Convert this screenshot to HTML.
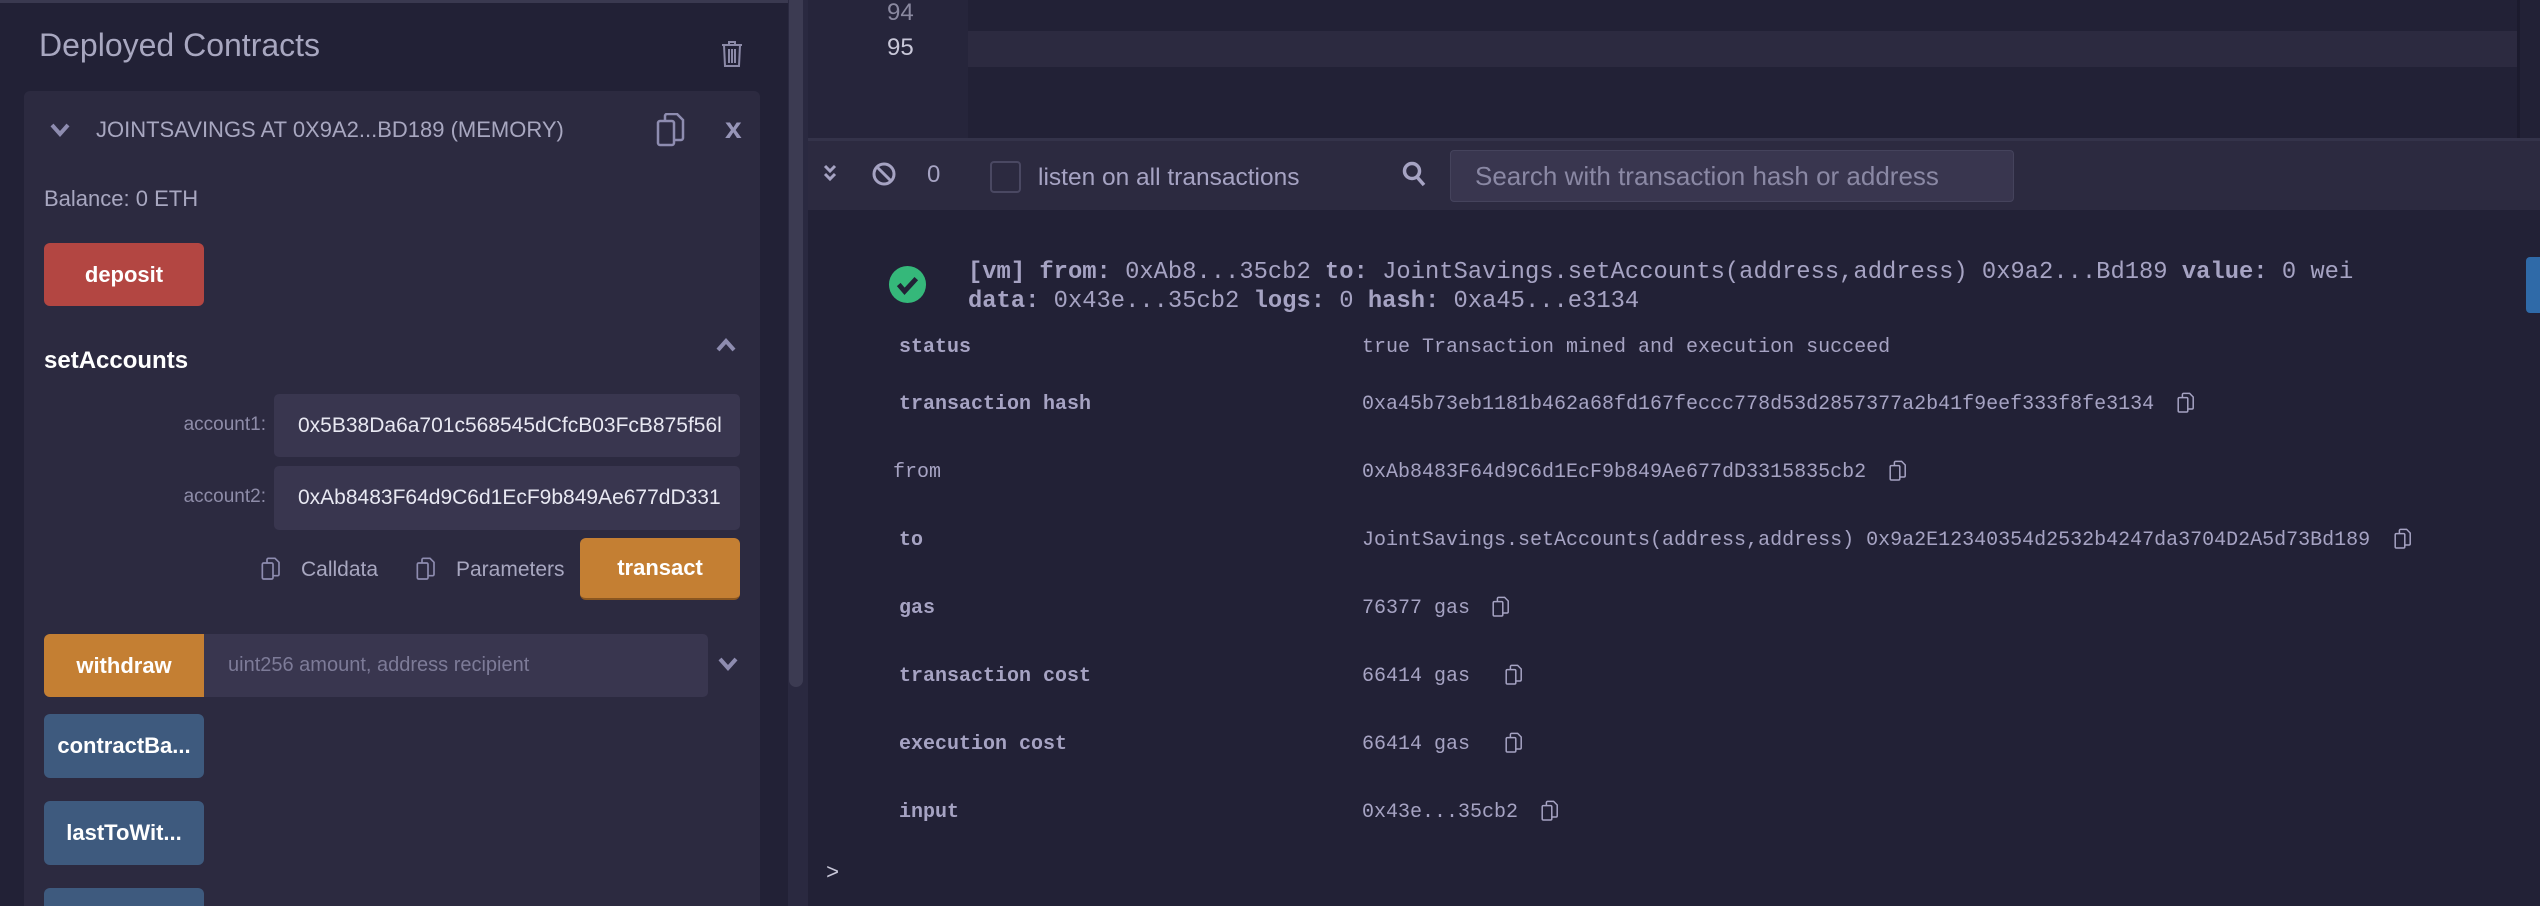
<!DOCTYPE html>
<html style="overflow:hidden;height:906px"><head><meta charset="utf-8"><style>
*{margin:0;padding:0;box-sizing:border-box}
body{width:2540px;height:906px;background:#222136;position:relative;overflow:hidden;font-family:"Liberation Sans",sans-serif;color:#a2a1bd}
.a{position:absolute;white-space:nowrap}
.btn{position:absolute;border-radius:6px;color:#fff;font-size:22px;font-weight:bold;display:flex;align-items:center;justify-content:center}
.inp{position:absolute;background:#39364f;border-radius:5px;color:#e8e8f2;font-size:21px;padding-left:24px;display:flex;align-items:center;overflow:hidden}
.mono{font-family:"Liberation Mono",monospace;color:#a6a3c3}
.lbl{font-size:20px;font-weight:bold}
.val{font-size:20px}
svg.cp{position:absolute}
</style></head><body>
<div class="a" style="left:0;top:0;width:788px;height:906px;background:#222136"></div>
<div class="a" style="left:0;top:0;width:788px;height:3px;background:#3a3950"></div>
<div class="a" style="left:39px;top:27px;font-size:32px;color:#a8a7c0">Deployed Contracts</div>
<svg class="cp" style="left:721px;top:40px" width="22" height="28" viewBox="0 0 22 28" fill="none" stroke="#8c8aa8" stroke-width="2"><path d="M1 5h20M8 5V2h6v3M3 5l1 21h14l1-21M8 9v14M11 9v14M14 9v14"/></svg>
<div class="a" style="left:24px;top:91px;width:736px;height:815px;background:#2c2a40;border-radius:6px 6px 0 0"></div>
<svg class="cp" style="left:50px;top:122px" width="20" height="16" viewBox="0 0 20 16"><path d="M2 3l8 9 8-9" fill="none" stroke="#8e8cb0" stroke-width="4"/></svg>
<div class="a" style="left:96px;top:117px;font-size:22px;color:#a8a7c0">JOINTSAVINGS AT 0X9A2...BD189 (MEMORY)</div>
<svg class="cp" style="left:656px;top:113px" width="30" height="34" viewBox="0 0 30 34" fill="none" stroke="#8e8cb0" stroke-width="2.5"><rect x="2" y="8" width="16" height="24" rx="2"/><path d="M9 8V3a2 2 0 0 1 2-2h10l6 6v18a2 2 0 0 1-2 2h-7"/></svg>
<div class="a" style="left:725px;top:112px;font-size:30px;font-weight:bold;color:#9795b8">x</div>
<div class="a" style="left:44px;top:186px;font-size:22px;color:#a8a7c0">Balance: 0 ETH</div>
<div class="btn" style="left:44px;top:243px;width:160px;height:63px;background:#b34642">deposit</div>
<div class="a" style="left:44px;top:347px;font-size:24px;font-weight:bold;color:#fff">setAccounts</div>
<svg class="cp" style="left:716px;top:337px" width="20" height="16" viewBox="0 0 20 16"><path d="M2 13l8-9 8 9" fill="none" stroke="#8e8cb0" stroke-width="4"/></svg>
<div class="a" style="left:170px;top:414px;width:96px;text-align:right;font-size:19px;color:#8e8ca8">account1:</div>
<div class="inp" style="left:274px;top:394px;width:466px;height:63px">0x5B38Da6a701c568545dCfcB03FcB875f56l</div>
<div class="a" style="left:170px;top:486px;width:96px;text-align:right;font-size:19px;color:#8e8ca8">account2:</div>
<div class="inp" style="left:274px;top:466px;width:466px;height:64px">0xAb8483F64d9C6d1EcF9b849Ae677dD331</div>
<svg class="cp" style="left:261px;top:557px" width="20" height="24" viewBox="0 0 30 34" fill="none" stroke="#8e8cb0" stroke-width="2.5"><rect x="2" y="8" width="16" height="24" rx="2"/><path d="M9 8V3a2 2 0 0 1 2-2h10l6 6v18a2 2 0 0 1-2 2h-7"/></svg>
<div class="a" style="left:301px;top:558px;font-size:21px;color:#a8a7c0">Calldata</div>
<svg class="cp" style="left:416px;top:557px" width="20" height="24" viewBox="0 0 30 34" fill="none" stroke="#8e8cb0" stroke-width="2.5"><rect x="2" y="8" width="16" height="24" rx="2"/><path d="M9 8V3a2 2 0 0 1 2-2h10l6 6v18a2 2 0 0 1-2 2h-7"/></svg>
<div class="a" style="left:456px;top:558px;font-size:21px;color:#a8a7c0">Parameters</div>
<div class="btn" style="left:580px;top:538px;width:160px;height:62px;background:#c47f33;border-bottom:2px solid #8a5620">transact</div>
<div class="btn" style="left:44px;top:634px;width:160px;height:63px;background:#c47f33;border-radius:6px 0 0 6px">withdraw</div>
<div class="inp" style="left:204px;top:634px;width:504px;height:63px;border-radius:0 5px 5px 0;color:#7d7b98;font-size:20px">uint256 amount, address recipient</div>
<svg class="cp" style="left:718px;top:656px" width="20" height="16" viewBox="0 0 20 16"><path d="M2 3l8 9 8-9" fill="none" stroke="#8e8cb0" stroke-width="4"/></svg>
<div class="btn" style="left:44px;top:714px;width:160px;height:64px;background:#3e5a7e">contractBa...</div>
<div class="btn" style="left:44px;top:801px;width:160px;height:64px;background:#3e5a7e">lastToWit...</div>
<div class="btn" style="left:44px;top:888px;width:160px;height:18px;background:#3e5a7e;border-radius:6px 6px 0 0"></div>
<div class="a" style="left:788px;top:0;width:20px;height:906px;background:#2a2940"></div>
<div class="a" style="left:789px;top:0;width:14px;height:687px;background:#3c3b52;border-radius:0 0 7px 7px"></div>
<div class="a" style="left:808px;top:0;width:1732px;height:138px;background:#222136"></div>
<div class="a" style="left:808px;top:0;width:160px;height:138px;background:#26253b"></div>
<div class="a" style="left:968px;top:31px;width:1550px;height:36px;background:#2c2a40"></div>
<div class="a" style="left:2517px;top:0;width:3px;height:138px;background:#1c1b2e"></div>
<div class="a" style="left:887px;top:-1px;font-size:24px;color:#8a89a0">94</div>
<div class="a" style="left:887px;top:34px;font-size:24px;color:#c8c7d8">95</div>
<div class="a" style="left:808px;top:138px;width:1732px;height:72px;background:#2c2a40;border-top:3px solid #34334a"></div>
<svg class="cp" style="left:822px;top:163px" width="16" height="20" viewBox="0 0 16 20"><path d="M3 3l5 5 5-5M3 11l5 5 5-5" fill="none" stroke="#a6a3c3" stroke-width="3"/></svg>
<svg class="cp" style="left:872px;top:162px" width="24" height="24" viewBox="0 0 24 24" fill="none" stroke="#a6a3c3" stroke-width="3"><circle cx="12" cy="12" r="10"/><path d="M5 5l14 14"/></svg>
<div class="a" style="left:927px;top:161px;font-size:24px;color:#a6a3c3">0</div>
<div class="a" style="left:990px;top:161px;width:31px;height:32px;border:2px solid #4a4862;border-radius:4px"></div>
<div class="a" style="left:1038px;top:164px;font-size:24.5px;color:#a6a3c3">listen on all transactions</div>
<svg class="cp" style="left:1402px;top:161px" width="26" height="28" viewBox="0 0 26 28" fill="none" stroke="#a6a3c3" stroke-width="3.5"><circle cx="10" cy="10" r="7.5"/><path d="M15 16l7 8"/></svg>
<div class="a" style="left:1450px;top:150px;width:564px;height:52px;background:#39364f;border:1px solid #45435c;border-radius:4px;color:#8a88a4;font-size:26px;padding-left:24px;line-height:50px">Search with transaction hash or address</div>
<div class="a" style="left:2526px;top:257px;width:14px;height:56px;background:#2f6aa8;border-radius:4px 0 0 4px"></div>
<svg class="cp" style="left:888px;top:265px" width="39" height="39" viewBox="0 0 40 40"><circle cx="20" cy="20" r="19" fill="#35b87a"/><path d="M11 20l6 7 12-13" fill="none" stroke="#222136" stroke-width="5"/></svg>
<div class="a mono" style="left:968px;top:258px;font-size:23.8px;line-height:29px"><b>[vm]</b>  <b>from:</b> 0xAb8...35cb2 <b>to:</b> JointSavings.setAccounts(address,address) 0x9a2...Bd189 <b>value:</b> 0 wei<br><b>data:</b> 0x43e...35cb2 <b>logs:</b> 0 <b>hash:</b> 0xa45...e3134</div>
<div class="a mono lbl" style="left:899px;top:336px">status</div>
<div class="a mono val" style="left:1362px;top:336px">true Transaction mined and execution succeed</div>
<div class="a mono lbl" style="left:899px;top:393px">transaction hash</div>
<div class="a mono val" style="left:1362px;top:393px">0xa45b73eb1181b462a68fd167feccc778d53d2857377a2b41f9eef333f8fe3134</div>
<div class="a mono val" style="left:893px;top:461px">from</div>
<div class="a mono val" style="left:1362px;top:461px">0xAb8483F64d9C6d1EcF9b849Ae677dD3315835cb2</div>
<div class="a mono lbl" style="left:899px;top:529px">to</div>
<div class="a mono val" style="left:1362px;top:529px">JointSavings.setAccounts(address,address) 0x9a2E12340354d2532b4247da3704D2A5d73Bd189</div>
<div class="a mono lbl" style="left:899px;top:597px">gas</div>
<div class="a mono val" style="left:1362px;top:597px">76377 gas</div>
<div class="a mono lbl" style="left:899px;top:665px">transaction cost</div>
<div class="a mono val" style="left:1362px;top:665px">66414 gas</div>
<div class="a mono lbl" style="left:899px;top:733px">execution cost</div>
<div class="a mono val" style="left:1362px;top:733px">66414 gas</div>
<div class="a mono lbl" style="left:899px;top:801px">input</div>
<div class="a mono val" style="left:1362px;top:801px">0x43e...35cb2</div>
<svg class="cp" style="left:2177px;top:392px" width="18" height="22" viewBox="0 0 30 34" fill="none" stroke="#a6a3c3" stroke-width="2.5"><rect x="2" y="8" width="16" height="24" rx="2"/><path d="M9 8V3a2 2 0 0 1 2-2h10l6 6v18a2 2 0 0 1-2 2h-7"/></svg>
<svg class="cp" style="left:1889px;top:460px" width="18" height="22" viewBox="0 0 30 34" fill="none" stroke="#a6a3c3" stroke-width="2.5"><rect x="2" y="8" width="16" height="24" rx="2"/><path d="M9 8V3a2 2 0 0 1 2-2h10l6 6v18a2 2 0 0 1-2 2h-7"/></svg>
<svg class="cp" style="left:2394px;top:528px" width="18" height="22" viewBox="0 0 30 34" fill="none" stroke="#a6a3c3" stroke-width="2.5"><rect x="2" y="8" width="16" height="24" rx="2"/><path d="M9 8V3a2 2 0 0 1 2-2h10l6 6v18a2 2 0 0 1-2 2h-7"/></svg>
<svg class="cp" style="left:1492px;top:596px" width="18" height="22" viewBox="0 0 30 34" fill="none" stroke="#a6a3c3" stroke-width="2.5"><rect x="2" y="8" width="16" height="24" rx="2"/><path d="M9 8V3a2 2 0 0 1 2-2h10l6 6v18a2 2 0 0 1-2 2h-7"/></svg>
<svg class="cp" style="left:1505px;top:664px" width="18" height="22" viewBox="0 0 30 34" fill="none" stroke="#a6a3c3" stroke-width="2.5"><rect x="2" y="8" width="16" height="24" rx="2"/><path d="M9 8V3a2 2 0 0 1 2-2h10l6 6v18a2 2 0 0 1-2 2h-7"/></svg>
<svg class="cp" style="left:1505px;top:732px" width="18" height="22" viewBox="0 0 30 34" fill="none" stroke="#a6a3c3" stroke-width="2.5"><rect x="2" y="8" width="16" height="24" rx="2"/><path d="M9 8V3a2 2 0 0 1 2-2h10l6 6v18a2 2 0 0 1-2 2h-7"/></svg>
<svg class="cp" style="left:1541px;top:800px" width="18" height="22" viewBox="0 0 30 34" fill="none" stroke="#a6a3c3" stroke-width="2.5"><rect x="2" y="8" width="16" height="24" rx="2"/><path d="M9 8V3a2 2 0 0 1 2-2h10l6 6v18a2 2 0 0 1-2 2h-7"/></svg>
<div class="a mono" style="left:826px;top:861px;font-size:22px;color:#c8c7d8">&gt;</div>
</body></html>
